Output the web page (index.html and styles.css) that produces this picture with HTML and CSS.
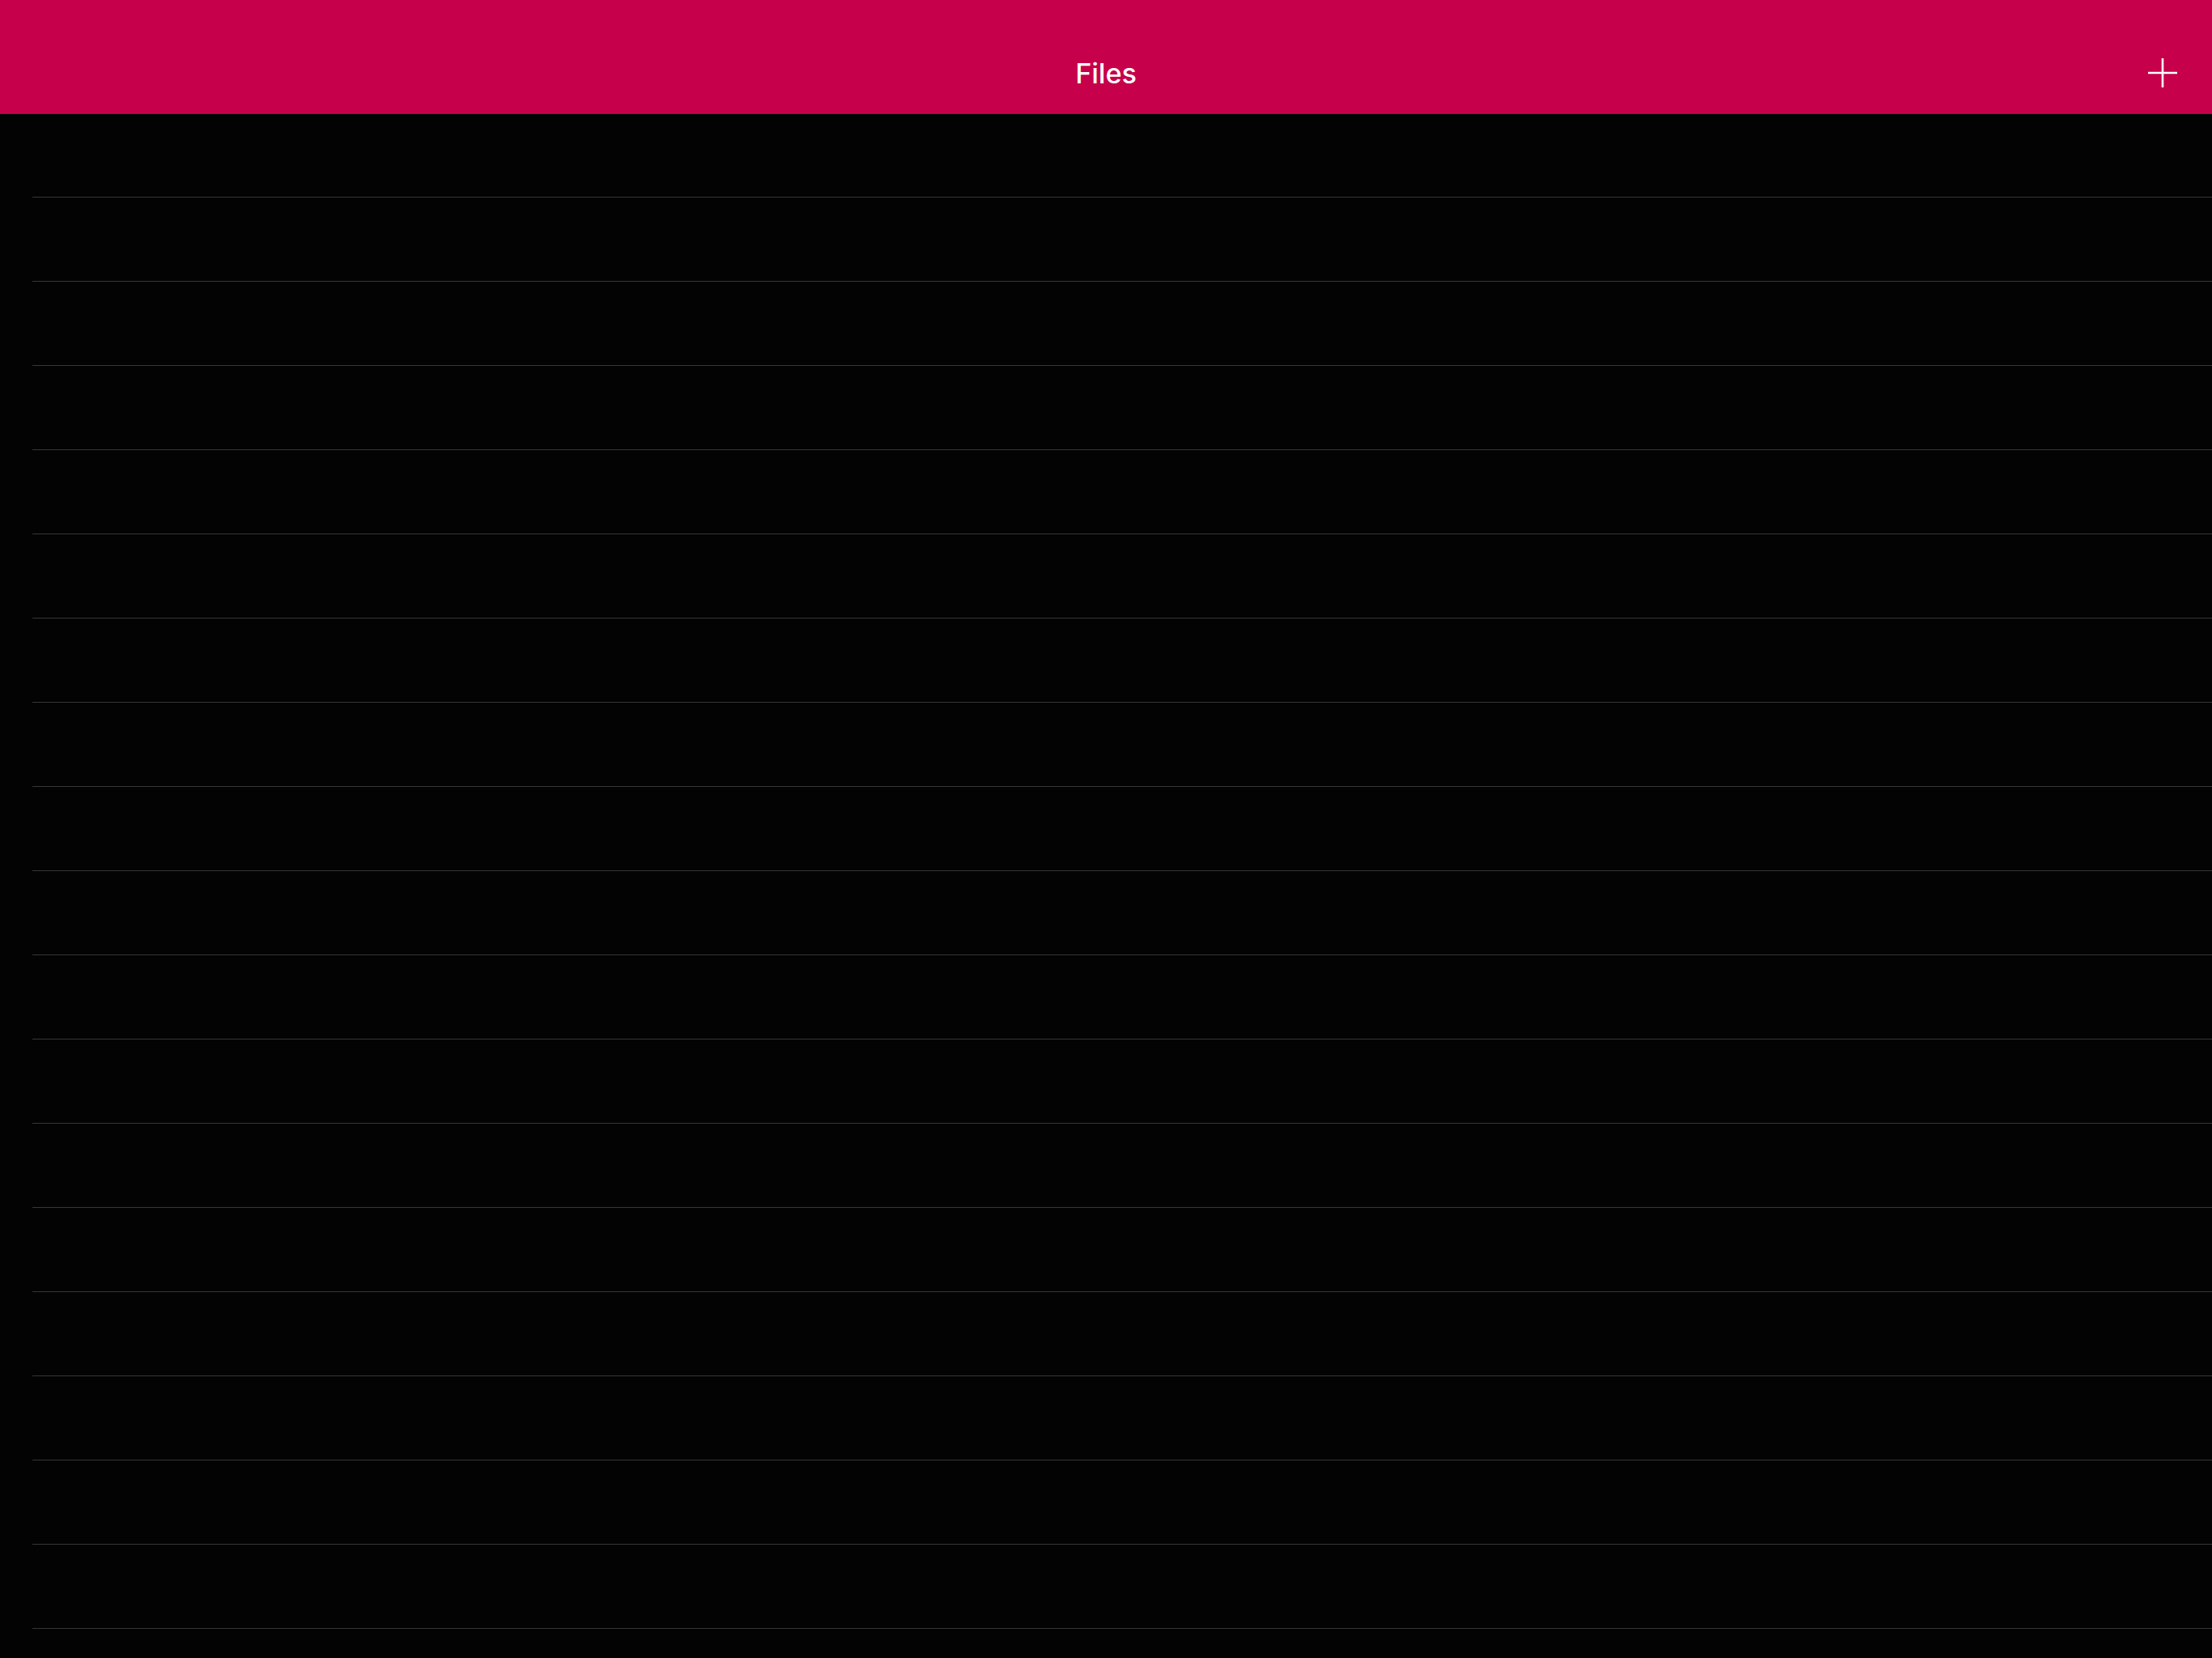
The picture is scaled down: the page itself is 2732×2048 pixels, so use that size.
FILE: index.html
```html
<!DOCTYPE html>
<html lang="en">
<head>
    <meta charset="UTF-8">
    <meta name="viewport" content="width=device-width, initial-scale=1.0">
    <title>Files</title>
    <link rel="stylesheet" href="styles.css">
</head>
<body>
    <div class="navbar">
        <div class="spacer"></div>
        <div class="title">Files</div>
        <div class="actions">
            <button class="add-btn" aria-label="Add">
                <svg width="36" height="36" viewBox="0 0 36 36">
                    <path d="M18 0 V36 M0 18 H36" stroke="#fff" stroke-width="2.6" fill="none"/>
                </svg>
            </button>
        </div>
    </div>
    <ul class="file-list">
        <li></li><li></li><li></li><li></li><li></li><li></li>
        <li></li><li></li><li></li><li></li><li></li><li></li>
        <li></li><li></li><li></li><li></li><li></li><li></li>
    </ul>
</body>
</html>
```

FILE: styles.css
```css
html, body {
    margin: 0;
    padding: 0;
}

body {
    font-family: 'Inter', 'Roboto', sans-serif;
    background: #030303;
    height: 100vh;
    overflow: hidden;
}

.navbar {
    display: grid;
    grid-template-columns: 1fr auto 1fr;
    align-items: center;
    height: 140px;
    box-sizing: border-box;
    padding-top: 40px; /* status bar area */
    background: #c6004a;
    box-shadow: 0 1px 0 #3a3a3a; /* hairline under the bar */
    position: relative;
    z-index: 1;
}

.navbar .title {
    color: #fff;
    font-size: 34px;
    font-weight: 500;
}

.navbar .actions {
    display: flex;
    justify-content: flex-end;
    padding-right: 43px;
}

.add-btn {
    background: transparent;
    border: none;
    padding: 0;
    display: flex;
    cursor: pointer;
}

.file-list {
    list-style: none;
    margin: 0;
    padding: 0 0 0 40px;
}

.file-list li {
    height: 104px;
    box-sizing: border-box;
    border-bottom: 1px solid #363636;
}
```
